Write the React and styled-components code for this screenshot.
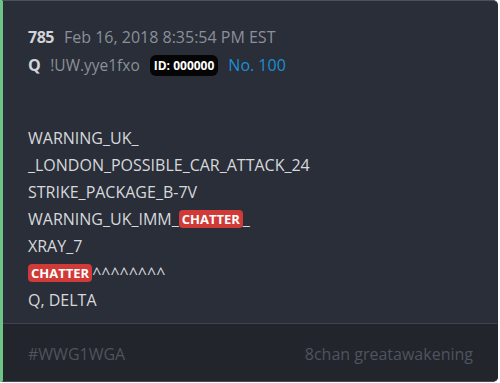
import styled, { createGlobalStyle } from "styled-components";

const lines = [
    ["WARNING_UK_"],
    ["_LONDON_POSSIBLE_CAR_ATTACK_24"],
    ["STRIKE_PACKAGE_B-7V"],
    ["WARNING_UK_IMM_", { tag: "CHATTER" }, "_"],
    ["XRAY_7"],
    [{ tag: "CHATTER" }, "^^^^^^^^"],
    ["Q, DELTA"],
];

const GlobalStyle = createGlobalStyle`
    body {
        margin: 0;
        background: #ffffff;
        font-family: "Open Sans", "Liberation Sans", sans-serif;
    }
`;

const Card = styled.div`
    width: 498px;
    height: 382px;
    box-sizing: border-box;
    display: flex;
    flex-direction: column;
    background-color: #2a2e38;
    border-left: 3px solid #6cc584;
    border-top: 1px solid #4d525b;
    border-bottom: 1px solid #444952;
    border-radius: 0 5px 5px 0;
    overflow: hidden;
`;

const Header = styled.div`
    padding: 22px 25px 0;
    display: flex;
    flex-direction: column;
`;

const MetaRow = styled.div`
    display: flex;
    align-items: center;
    gap: 10px;
    height: 28px;
    font-size: 15px;
`;

const Strong = styled.span`
    font-weight: 700;
    font-size: 16px;
    letter-spacing: -0.5px;
    color: #d2d4d8;
`;

const Muted = styled.span`
    color: #8b9099;
    font-size: ${(p) => (p.$large ? "16px" : "15.5px")};
`;

const IdBadge = styled.span`
    background: #050505;
    color: #ffffff;
    font-weight: 700;
    font-size: 12px;
    line-height: 21px;
    padding: 0 4px;
    border-radius: 6px;
`;

const PostLink = styled.span`
    color: #1b8fd4;
    font-size: 16px;
`;

const Body = styled.div`
    flex: 1;
    padding: 46px 25px 0;
    font-size: 16px;
    line-height: 27px;
    color: #d6d8dc;
`;

const Line = styled.div`
    white-space: nowrap;
`;

const Tag = styled.span`
    display: inline-block;
    background: #d03a37;
    color: #ffffff;
    font-weight: 700;
    font-size: 13px;
    line-height: 18px;
    padding: 0 3px;
    border-radius: 4px;
    vertical-align: 1px;
`;

const Footer = styled.div`
    height: 55px;
    border-top: 1px solid #3e434d;
    background: #22252c;
    display: flex;
    align-items: center;
    justify-content: space-between;
    padding: 2px 25px 0;
    font-size: 16px;
    color: #4f545d;
`;

const App = () => {
    return (
        <>
            <GlobalStyle />
            <Card>
                <Header>
                    <MetaRow>
                        <Strong>785</Strong>
                        <Muted $large>Feb 16, 2018 8:35:54 PM EST</Muted>
                    </MetaRow>
                    <MetaRow>
                        <Strong>Q</Strong>
                        <Muted>!UW.yye1fxo</Muted>
                        <IdBadge>ID: 000000</IdBadge>
                        <PostLink>No. 100</PostLink>
                    </MetaRow>
                </Header>
                <Body>
                    {lines.map((parts, i) => (
                        <Line key={`line-${i}`}>
                            {parts.map((p, j) =>
                                typeof p === "string" ? p : <Tag key={j}>{p.tag}</Tag>
                            )}
                        </Line>
                    ))}
                </Body>
                <Footer>
                    <span>#WWG1WGA</span>
                    <span>8chan greatawakening</span>
                </Footer>
            </Card>
        </>
    );
};

export default App;
